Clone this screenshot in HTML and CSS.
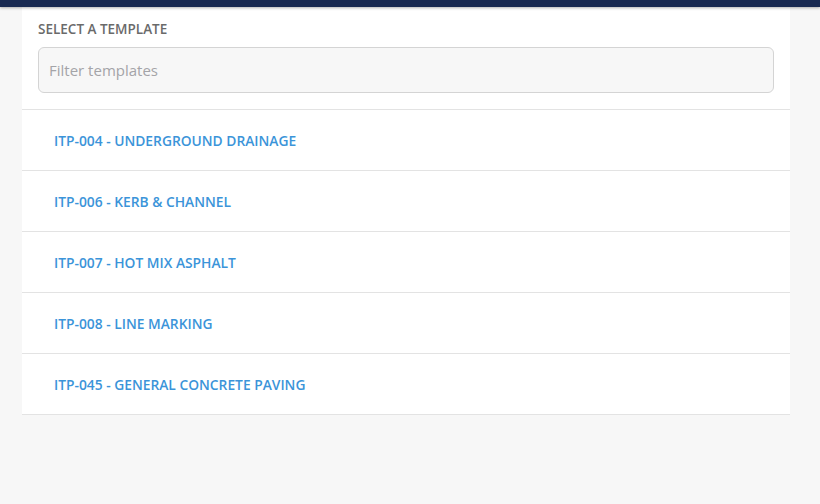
FILE: index.html
```html
<!DOCTYPE html>
<html>
<head>
<meta charset="utf-8">
<link rel="stylesheet" href="styles.css">
</head>
<body>
<div class="topbar"></div>
<main class="page">
  <section class="card">
    <div class="card-head">
      <div class="label">SELECT A TEMPLATE</div>
      <input class="filter" type="text" placeholder="Filter templates">
    </div>
    <ul class="list">
      <li class="item"><a href="#">ITP-004 - UNDERGROUND DRAINAGE</a></li>
      <li class="item"><a href="#">ITP-006 - KERB &amp; CHANNEL</a></li>
      <li class="item"><a href="#">ITP-007 - HOT MIX ASPHALT</a></li>
      <li class="item"><a href="#">ITP-008 - LINE MARKING</a></li>
      <li class="item"><a href="#">ITP-045 - GENERAL CONCRETE PAVING</a></li>
    </ul>
  </section>
</main>
</body>
</html>
```
FILE: styles.css
```css
html, body {
  margin: 0;
  padding: 0;
  background: #f7f7f7;
  font-family: "Open Sans", "Noto Sans", sans-serif;
  height: 100%;
}
.topbar {
  height: 7px;
  background: #192a52;
  box-shadow: 0 1px 3px rgba(0,0,0,0.3);
  position: relative;
  z-index: 2;
}
.page {
  padding: 0 30px 0 22px;
}
.card {
  background: #fff;
}
.card-head {
  padding: 13px 16px 16px 16px;
  border-bottom: 1px solid #e3e3e3;
}
.label {
  font-size: 13.5px;
  font-weight: 600;
  color: #6a6a6a;
  line-height: 18px;
  margin-bottom: 9px;
}
.filter {
  display: block;
  box-sizing: border-box;
  width: 100%;
  height: 46px;
  border: 1px solid #d4d4d4;
  border-radius: 6px;
  background: #f7f7f7;
  padding: 0 10px;
  font-family: inherit;
  font-size: 15px;
  color: #333;
  outline: none;
}
.filter::placeholder {
  color: #a4a4a8;
}
.list {
  list-style: none;
  margin: 0;
  padding: 0;
}
.item {
  height: 60px;
  border-bottom: 1px solid #e3e3e3;
  display: flex;
  align-items: center;
  padding-left: 32px;
}
.item a {
  color: #3b94d9;
  text-decoration: none;
  font-size: 13.8px;
  font-weight: 600;
}
```
